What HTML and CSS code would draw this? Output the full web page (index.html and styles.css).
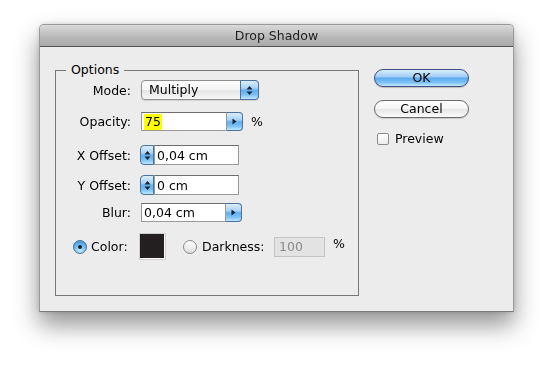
FILE: index.html
```html
<!DOCTYPE html>
<html>
<head>
<meta charset="utf-8">
<link rel="stylesheet" href="styles.css">
</head>
<body>
<div class="shadow-wrap">
<div class="window">
  <div class="titlebar">Drop Shadow</div>
  <div class="content">
    <div class="group">
      <span class="legend">Options</span>
      <div class="row r-mode">
        <span class="lbl">Mode:</span>
        <div class="select">
          <span class="select-text">Multiply</span>
          <span class="select-arrows aqua">
            <svg width="7" height="11" viewBox="0 0 7 11"><path d="M3.5 1 L6.5 4.5 L0.5 4.5 Z M3.5 10 L6.5 6.5 L0.5 6.5 Z" fill="#1b2430"/></svg>
          </span>
        </div>
      </div>
      <div class="row r-opacity">
        <span class="lbl">Opacity:</span>
        <div class="combo">
          <span class="field f-opacity"><span class="hl">75</span></span>
          <span class="pop aqua"><svg width="5" height="7" viewBox="0 0 5 7"><path d="M0.5 0.5 L4.5 3.5 L0.5 6.5 Z" fill="#1b2430"/></svg></span>
        </div>
        <span class="unit">%</span>
      </div>
      <div class="row r-x">
        <span class="lbl">X Offset:</span>
        <div class="combo">
          <span class="stepper aqua"><svg width="7" height="11" viewBox="0 0 7 11"><path d="M3.5 1 L6.5 4.5 L0.5 4.5 Z M3.5 10 L6.5 6.5 L0.5 6.5 Z" fill="#1b2430"/></svg></span>
          <span class="field f-off">0,04 cm</span>
        </div>
      </div>
      <div class="row r-y">
        <span class="lbl">Y Offset:</span>
        <div class="combo">
          <span class="stepper aqua"><svg width="7" height="11" viewBox="0 0 7 11"><path d="M3.5 1 L6.5 4.5 L0.5 4.5 Z M3.5 10 L6.5 6.5 L0.5 6.5 Z" fill="#1b2430"/></svg></span>
          <span class="field f-off">0 cm</span>
        </div>
      </div>
      <div class="row r-blur">
        <span class="lbl">Blur:</span>
        <div class="combo c-blur">
          <span class="field f-blur">0,04 cm</span>
          <span class="pop aqua"><svg width="5" height="7" viewBox="0 0 5 7"><path d="M0.5 0.5 L4.5 3.5 L0.5 6.5 Z" fill="#1b2430"/></svg></span>
        </div>
      </div>
      <div class="row r-color">
        <span class="radio-lbl">
          <span class="radio on"><span class="dot"></span></span>
          <span class="rtext">Color:</span>
        </span>
        <span class="swatch"></span>
        <span class="radio off"></span>
        <span class="rtext dark-text">Darkness:</span>
        <span class="field f-dark">100</span>
        <span class="unit u-dark">%</span>
      </div>
    </div>
    <div class="side">
      <button class="btn ok">OK</button>
      <button class="btn cancel">Cancel</button>
      <div class="check"><span class="box"></span><span>Preview</span></div>
    </div>
  </div>
</div>
</div>
</body>
</html>
```

FILE: styles.css
```css
* { box-sizing: border-box; }
html, body { margin: 0; padding: 0; background: #fff; }
body {
  min-height: 366px;
  padding: 24px 0 0 39px;
  font-family: "DejaVu Sans", "Liberation Sans", sans-serif;
  font-size: 12.5px;
  color: #000;
}
.shadow-wrap {
  width: 475px;
  filter: drop-shadow(0 13px 12px rgba(0,0,0,0.42));
}
.window {
  width: 475px;
  height: 288px;
  border: 1px solid #9a9a9a;
  border-bottom-color: #7a7a7a;
  border-radius: 5px 5px 0 0;
  background: #ececec;
  box-shadow: 0 0 5px rgba(0,0,0,0.15);
  display: flex;
  flex-direction: column;
}
.titlebar {
  height: 22px;
  border-bottom: 1px solid #525252;
  border-radius: 4px 4px 0 0;
  background: linear-gradient(#dadada, #b8b8b8 60%, #a9a9a9);
  text-align: center;
  line-height: 22px;
  color: #1e1e1e;
  font-size: 12.5px;
}
.content {
  display: flex;
  padding: 23px 0 0 15px;
}
.group {
  position: relative;
  width: 304px;
  height: 226px;
  border: 1px solid #777;
  display: flex;
  flex-direction: column;
}
.legend {
  position: absolute;
  left: 10px;
  top: -9px;
  padding: 0 5px;
  background: #ececec;
  line-height: 16px;
}
.row {
  display: flex;
  align-items: center;
}
.lbl {
  width: 75px;
  text-align: right;
  margin-right: 9px;
}
.r-mode { margin-top: 9px; height: 20px; }
.r-opacity { margin-top: 12px; height: 19px; }
.r-x { margin-top: 14px; height: 20px; }
.r-y { margin-top: 10px; height: 20px; }
.r-blur { margin-top: 8px; height: 19px; }
.r-color { margin-top: 12px; height: 25px; }

.aqua {
  background: linear-gradient(#dcedfc 0%, #a6d2f6 40%, #63afef 52%, #78bff4 75%, #bfe5fd 100%);
  border: 1px solid #49729f;
  display: flex;
  align-items: center;
  justify-content: center;
}
.select {
  margin-left: 1px;
  width: 118px;
  height: 20px;
  display: flex;
  border: 1px solid #8e8e8e;
  border-radius: 4px;
  background: linear-gradient(#ffffff, #f3f3f3 50%, #e4e4e4 51%, #f6f6f6);
  box-shadow: 0 1px 1px rgba(0,0,0,0.12);
}
.select-text {
  flex: 1;
  padding-left: 7px;
  line-height: 18px;
}
.select-arrows {
  width: 19px;
  margin: -1px -1px -1px 0;
  border-radius: 0 4px 4px 0;
}
.combo {
  display: flex;
  height: 100%;
}
.r-opacity .combo, .c-blur { margin-left: 1px; }
.field {
  background: #fff;
  border: 1px solid #9a9a9a;
  border-top-color: #6e6e6e;
  line-height: 17px;
  padding-left: 2px;
  white-space: nowrap;
  display: flex;
  align-items: center;
}
.f-opacity { width: 86px; }
.hl { background: #ffff00; padding: 0 1px; line-height: 16px; }
.pop {
  width: 16px;
  border-radius: 0 4px 4px 0;
  border-left: none;
}
.unit { margin-left: 8px; }
.stepper {
  width: 14px;
  border-radius: 4px 0 0 4px;
}
.f-off { width: 85px; }
.f-blur { width: 85px; }

.radio-lbl {
  width: 84px;
  display: flex;
  align-items: center;
  padding-left: 17px;
}
.radio {
  width: 14px;
  height: 14px;
  border-radius: 50%;
  display: flex;
  align-items: center;
  justify-content: center;
  flex: none;
}
.radio.on {
  border: 1px solid #4b6f98;
  background: radial-gradient(circle at 50% 80%, #c8ecff 0%, #7cc0f4 45%, #4f9fe4 75%);
}
.radio.on .dot {
  width: 4px;
  height: 4px;
  border-radius: 50%;
  background: #152233;
}
.radio.off {
  margin-left: 18px;
  border: 1px solid #8a8a8a;
  background: linear-gradient(#ffffff, #f0f0f0 50%, #dcdcdc);
}
.rtext { margin-left: 4px; }
.dark-text { margin-left: 5px; width: 72px; }
.swatch {
  width: 25px;
  height: 25px;
  background: #231f20;
  border-right: 1px solid #fff;
  border-bottom: 1px solid #fff;
  outline: 1px solid #cfcfcf;
}
.f-dark {
  width: 51px;
  height: 20px;
  background: #e3e3e3;
  border-color: #c4c4c4;
  color: #8a8a8a;
  padding-left: 4px;
}
.u-dark { margin-left: 8px; margin-top: -6px; }

.side {
  display: flex;
  flex-direction: column;
  margin-left: 15px;
  margin-top: -1px;
}
.btn {
  width: 95px;
  height: 18px;
  border-radius: 9px;
  font-family: inherit;
  font-size: 12.5px;
  padding: 0;
  line-height: 16px;
  color: #000;
}
.ok {
  border: 1px solid #3d4f85;
  background: linear-gradient(#d8ecfc 0%, #a4d0f5 40%, #5fabee 52%, #7cc2f6 78%, #c6e8fe 100%);
  box-shadow: 0 1px 1px rgba(0,0,0,0.2);
}
.cancel {
  margin-top: 13px;
  border: 1px solid #6d6d6d;
  background: linear-gradient(#ffffff, #f4f4f4 48%, #e6e6e6 52%, #fbfbfb);
  box-shadow: 0 1px 1px rgba(0,0,0,0.15);
}
.check {
  display: flex;
  align-items: center;
  margin-top: 13px;
  margin-left: 3px;
}
.box {
  width: 12px;
  height: 12px;
  border: 1px solid #8a8a8a;
  border-radius: 2px;
  background: linear-gradient(#ffffff, #ececec);
  margin-right: 6px;
}
```
